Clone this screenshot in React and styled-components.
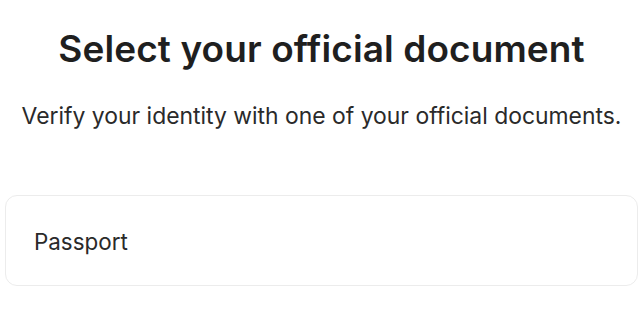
import React from "react";
import styled, { createGlobalStyle } from "styled-components";

const Global = createGlobalStyle`
  html, body { margin: 0; padding: 0; background: #ffffff; }
  body { font-family: Inter, "Noto Sans", sans-serif; color: #222222; }
  * { box-sizing: border-box; }
`;

const Page = styled.main`
  display: flex;
  flex-direction: column;
  align-items: stretch;
  padding: 22px 6px 0 5px;
`;

const Title = styled.h1`
  margin: 0;
  text-align: center;
  font-size: 37px;
  line-height: 54px;
  font-weight: 600;
  letter-spacing: 0.1px;
  color: #1f1f1f;
`;

const Subtitle = styled.p`
  margin: 26px 0 0;
  text-align: center;
  font-size: 22.9px;
  line-height: 28px;
  font-weight: 400;
  color: #2a2a2a;
`;

const OptionList = styled.div`
  display: flex;
  flex-direction: column;
  gap: 12px;
  margin-top: 65px;
`;

const Option = styled.button`
  display: flex;
  align-items: center;
  height: 91px;
  padding: 2px 28px 0;
  border: 1px solid #ececec;
  border-radius: 12px;
  background: #ffffff;
  font-family: inherit;
  font-size: 22.4px;
  color: #2a2a2a;
  text-align: left;
  cursor: pointer;
`;

export default function App() {
  return (
    <>
      <Global />
      <Page>
        <Title>Select your official document</Title>
        <Subtitle>Verify your identity with one of your official documents.</Subtitle>
        <OptionList>
          <Option>Passport</Option>
        </OptionList>
      </Page>
    </>
  );
}
